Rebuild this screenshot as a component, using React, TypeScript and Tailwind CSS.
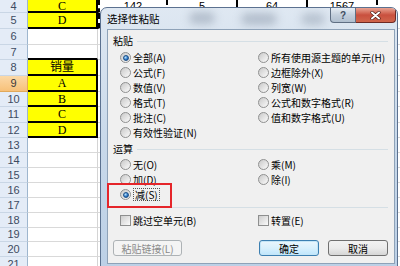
import React from "react"

type SheetRow = {
  n: number
  h: string
  b: string
  yellow: boolean
  blackBottom: boolean
  sel?: boolean
  dash?: boolean
}

const rows: SheetRow[] = [
  { n: 4, h: "h-[13px]", b: "C", yellow: true, blackBottom: true, dash: true },
  { n: 5, h: "h-[16px]", b: "D", yellow: true, blackBottom: true, dash: true },
  { n: 6, h: "h-[16px]", b: "", yellow: false, blackBottom: false },
  { n: 7, h: "h-[15px]", b: "", yellow: false, blackBottom: true },
  { n: 8, h: "h-[16px]", b: "销量", yellow: true, blackBottom: true },
  { n: 9, h: "h-[16px]", b: "A", yellow: true, blackBottom: true, sel: true },
  { n: 10, h: "h-[15px]", b: "B", yellow: true, blackBottom: true },
  { n: 11, h: "h-[16px]", b: "C", yellow: true, blackBottom: true },
  { n: 12, h: "h-[15px]", b: "D", yellow: true, blackBottom: true },
  { n: 13, h: "h-[15px]", b: "", yellow: false, blackBottom: false },
  { n: 14, h: "h-[15px]", b: "", yellow: false, blackBottom: false },
  { n: 15, h: "h-[15px]", b: "", yellow: false, blackBottom: false },
  { n: 16, h: "h-[15px]", b: "", yellow: false, blackBottom: false },
  { n: 17, h: "h-[15px]", b: "", yellow: false, blackBottom: false },
  { n: 18, h: "h-[15px]", b: "", yellow: false, blackBottom: false },
  { n: 19, h: "h-[14px]", b: "", yellow: false, blackBottom: false },
  { n: 20, h: "h-[15px]", b: "", yellow: false, blackBottom: false },
  { n: 21, h: "h-[15px]", b: "", yellow: false, blackBottom: false },
]

const topValues = ["142", "5", "64", "1567"]

const ui = "[font-family:'Noto_Sans_CJK_SC','Noto_Sans',sans-serif]"

function Radio({ on }: { on?: boolean }) {
  return (
    <span className="flex h-[11px] w-[11px] shrink-0 items-center justify-center rounded-full border border-[#8f9090] bg-linear-to-br from-[#c9c9c9] to-[#fbfbfb]">
      {on && (
        <span className="h-[6px] w-[6px] rounded-full border border-[#1d4f86] bg-[radial-gradient(circle_at_35%_35%,#b8e4ff,#2a74c4_60%,#154a8a)]" />
      )}
    </span>
  )
}

function Check() {
  return (
    <span className="h-[11px] w-[11px] shrink-0 border border-[#8e8f8f] bg-linear-to-br from-[#cdcdcd] to-[#fbfbfb]" />
  )
}

function Opt({ label, on, focus }: { label: string; on?: boolean; focus?: boolean }) {
  return (
    <div className="flex h-[15px] items-center gap-[2px]">
      <Radio on={on} />
      <span className={focus ? "border border-dotted border-[#555] px-[1px] leading-[11px]" : "leading-none"}>{label}</span>
    </div>
  )
}

function Sheet() {
  return (
    <div className="flex flex-col [font-family:'Liberation_Sans',sans-serif]">
      {rows.map((r) => (
        <div key={r.n} className={`flex ${r.h}`}>
          <div
            className={`flex w-[28px] shrink-0 items-center justify-center border-r border-b text-[11px] ${
              r.sel
                ? "border-[#e1a95a] bg-linear-to-b from-[#fbd9a8] to-[#f7c179] text-[#3b3b3b]"
                : "border-r-[#9eb6ce] border-b-[#c9d6e5] bg-[#e4ecf7] text-[#3d4b61]"
            }`}
          >
            {r.n}
          </div>
          <div
            className={`flex w-[70px] shrink-0 items-center justify-center text-[12px] [font-family:'Liberation_Serif','Noto_Sans_CJK_SC',serif] ${
              r.yellow ? "border-r-2 border-r-black bg-[#ffff00]" : "border-r border-r-[#d4d4d4] bg-white"
            } ${r.blackBottom ? "border-b-2 border-b-black" : "border-b border-b-[#d9d9d9]"}`}
          >
            {r.b}
          </div>
          {r.n === 4 ? (
            topValues.map((v, i) => (
              <div
                key={v}
                className={`flex w-[70px] shrink-0 items-center justify-center border-b border-b-[#d9d9d9] bg-white text-[11px] text-black ${
                  i === 3 ? "border-r-2 border-dashed border-r-black" : "border-r-2 border-r-black"
                } ${i === 0 ? "border-l-2 border-dashed border-l-black" : ""}`}
              >
                {v}
              </div>
            ))
          ) : (
            <div
              className={`flex-1 border-b border-b-[#d9d9d9] bg-white ${r.dash ? "border-l-2 border-dashed border-l-black" : ""}`}
            />
          )}
        </div>
      ))}
    </div>
  )
}

function Dialog() {
  return (
    <div
      className={`absolute left-[100px] top-[7px] flex h-[262px] w-[298px] flex-col overflow-hidden rounded-t-[7px] border border-[#5b7190] bg-linear-to-b from-[#dfe8f2] via-[#c9d9ea] to-[#bcd0e6] ${ui}`}
    >
      {/* blurred backdrop under the glass */}
      <div className="pointer-events-none absolute left-[88px] top-[4px] h-[12px] w-[26px] rounded-full bg-[#8a97a8] opacity-50 blur-[4px]" />
      <div className="pointer-events-none absolute left-[140px] top-[5px] h-[12px] w-[36px] rounded-full bg-[#8a97a8] opacity-50 blur-[4px]" />
      <div className="pointer-events-none absolute left-[200px] top-[5px] h-[12px] w-[24px] rounded-full bg-[#8a97a8] opacity-45 blur-[4px]" />

      <div className="relative flex h-[21px] shrink-0 items-center pl-[6px] text-[10.5px] text-black">
        <span className="relative">选择性粘贴</span>
        <div className="absolute right-[1px] top-0 flex h-[15px]">
          <div className="flex w-[26px] items-center justify-center rounded-bl-[4px] border border-t-0 border-[#5f6f83] bg-linear-to-b from-[#e6edf4] via-[#c3cfdc] to-[#b0bfcf] text-[10px] font-bold text-[#3f4d60] [font-family:'Liberation_Sans',sans-serif]">
            ?
          </div>
          <div className="flex w-[40px] items-center justify-center rounded-br-[4px] border border-t-0 border-l-0 border-[#6e2a24] bg-linear-to-b from-[#e8a393] via-[#c9503e] to-[#d0654c]">
            <svg width="11" height="9" viewBox="0 0 11 9">
              <path d="M2 1.5 L9 7.5 M9 1.5 L2 7.5" stroke="#4a1a14" strokeWidth="3.2" strokeLinecap="round" />
              <path d="M2 1.5 L9 7.5 M9 1.5 L2 7.5" stroke="#ffffff" strokeWidth="2" strokeLinecap="round" />
            </svg>
          </div>
        </div>
      </div>

      <div className="relative mb-[4px] ml-[6px] mr-[2px] flex-1 border border-[#8ea2b8] bg-[#f0f0f0] px-[5px] pt-[3px] pr-[6px] text-[10px] text-black">
        <div className="flex h-[14px] items-center">
          <span>粘贴</span>
          <div className="ml-[4px] mt-[2px] flex-1 border-t border-[#d5dfe5]" />
        </div>
        <div className="mt-[3px] grid grid-cols-[138px_1fr] pl-[7px]">
          <div className="flex flex-col">
            <Opt label="全部(A)" on />
            <Opt label="公式(F)" />
            <Opt label="数值(V)" />
            <Opt label="格式(T)" />
            <Opt label="批注(C)" />
            <Opt label="有效性验证(N)" />
          </div>
          <div className="flex flex-col">
            <Opt label="所有使用源主题的单元(H)" />
            <Opt label="边框除外(X)" />
            <Opt label="列宽(W)" />
            <Opt label="公式和数字格式(R)" />
            <Opt label="值和数字格式(U)" />
          </div>
        </div>
        <div className="mt-[1px] flex h-[14px] items-center">
          <span>运算</span>
          <div className="ml-[4px] mt-[2px] flex-1 border-t border-[#d5dfe5]" />
        </div>
        <div className="mt-[2px] grid grid-cols-[138px_1fr] pl-[7px]">
          <div className="flex flex-col">
            <Opt label="无(O)" />
            <Opt label="加(D)" />
            <Opt label="减(S)" on focus />
          </div>
          <div className="flex flex-col">
            <Opt label="乘(M)" />
            <Opt label="除(I)" />
          </div>
        </div>
        <div className="mt-[5px] border-t border-[#d5dfe5]" />
        <div className="mt-[5px] grid grid-cols-[138px_1fr] pl-[7px]">
          <div className="flex h-[15px] items-center gap-[2px]">
            <Check />
            <span>跳过空单元(B)</span>
          </div>
          <div className="flex h-[15px] items-center gap-[2px]">
            <Check />
            <span>转置(E)</span>
          </div>
        </div>
        <div className="mt-[12px] flex h-[16px] pl-[0px]">
          <div className="flex w-[69px] items-center justify-center rounded-[3px] border border-[#adb2b5] bg-[#f4f4f4] text-[#8a8a8a]">
            粘贴链接(L)
          </div>
          <div className="ml-auto flex w-[60px] items-center justify-center rounded-[3px] border border-[#3c7fb1] bg-linear-to-b from-[#eaf6fd] via-[#d9f0fc] to-[#bee6fd] shadow-[inset_0_0_0_1px_#c4e5f6]">
            确定
          </div>
          <div className="ml-[9px] flex w-[60px] items-center justify-center rounded-[3px] border border-[#707070] bg-linear-to-b from-[#f2f2f2] via-[#ebebeb] to-[#d6d6d6]">
            取消
          </div>
        </div>

        {/* red annotation box */}
        <div className="absolute left-[-1px] top-[153px] h-[25px] w-[65px] border-2 border-[#e5252a]" />
      </div>
    </div>
  )
}

export default function App() {
  return (
    <div className="relative h-[266px] w-[400px] overflow-hidden bg-white">
      <Sheet />
      <Dialog />
    </div>
  )
}
